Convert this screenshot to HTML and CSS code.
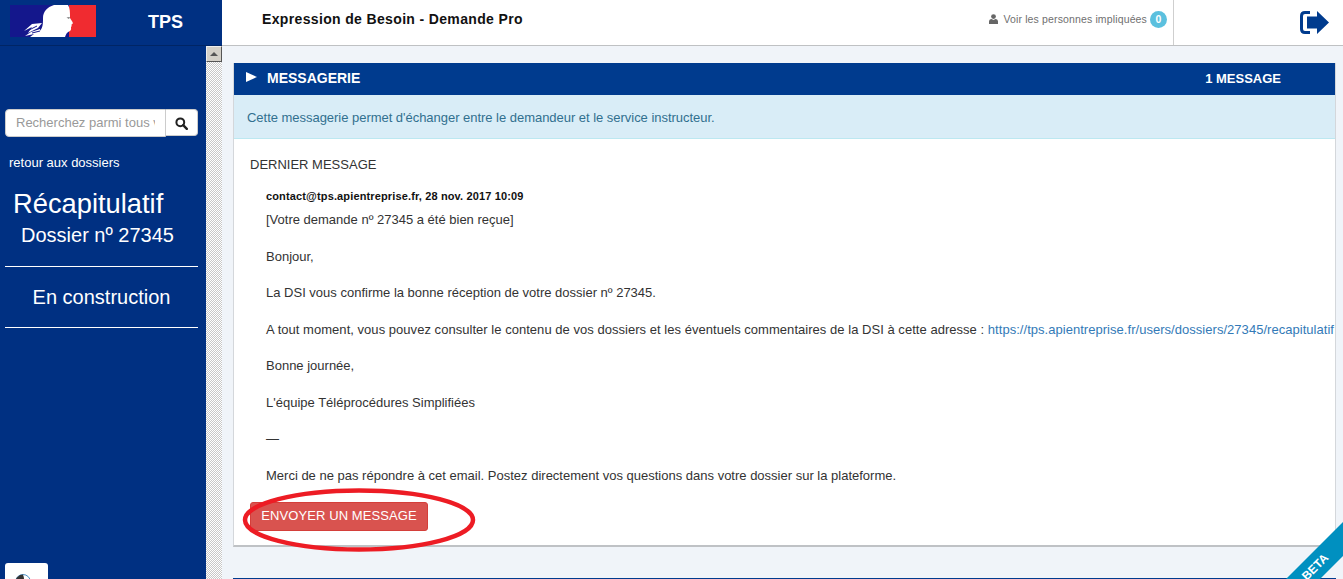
FILE: index.html
```html
<!DOCTYPE html>
<html lang="fr">
<head>
<meta charset="utf-8">
<title>TPS - Messagerie</title>
<link rel="stylesheet" href="styles.css">
</head>
<body>
<div class="app">
  <header class="topbar">
    <div class="brand">
      <svg class="logo" width="86" height="32" viewBox="0 0 86 32">
        <rect width="59" height="32" fill="#14178c"/>
        <rect x="59" width="27" height="32" fill="#f02b30"/>
        <path d="M44 0C37 2 33 7 33 13C33 19 33 23 29 27C27 29 27 31 30 32H55C56 29 57 27 60 26C61.500 25 61 23 61 22C62 21.500 61.500 20 61.500 19.500C63 19 63 18 62.500 17L60 13C60 7 60 3 58 0Z" fill="#fff"/>
        <path d="M32 18L22 19L14 26L22 22L18 28L28 23Z" fill="#fff"/>
        <path d="M30 24L21 27L15 31L24 29L20 32H31Z" fill="#fff"/>
        <path d="M19 25L27 21M22 28L30 26" stroke="#14178c" stroke-width="1"/>
        <path d="M56.500 12.500L60 12L59 14Z" fill="#777"/>
      </svg>
      <span class="brand-name">TPS</span>
    </div>
    <div class="title-area">
      <h1 class="page-title">Expression de Besoin - Demande Pro</h1>
      <div class="people">
        <svg class="user-icon" width="9" height="10" viewBox="0 0 9 10"><circle cx="4.500" cy="2.600" r="2.400" fill="#666"/><path d="M0 10V7.500C0 5.800 1.500 5 2.500 5L4.500 6L6.500 5C7.500 5 9 5.800 9 7.500V10Z" fill="#666"/></svg>
        <span class="people-label">Voir les personnes impliquées</span>
        <span class="badge">0</span>
      </div>
    </div>
    <div class="logout">
      <svg width="29" height="23" viewBox="0 0 29 23">
        <path d="M10 1.500H5C2.800 1.500 1.500 2.800 1.500 5V18C1.500 20.200 2.800 21.500 5 21.500H10" fill="none" stroke="#003b8e" stroke-width="3"/>
        <path d="M7 5.500H17V0L29 11.500L17 23V17.500H7Z" fill="#003b8e"/>
      </svg>
    </div>
  </header>
  <div class="workspace">
    <aside class="sidebar">
      <form class="search">
        <input class="search-input" type="text" placeholder="Recherchez parmi tous vos dossiers">
        <button class="search-btn" type="button" aria-label="Rechercher">
          <svg width="13" height="13" viewBox="0 0 13 13"><circle cx="5.300" cy="5.300" r="3.900" fill="none" stroke="#222" stroke-width="2"/><path d="M8.200 8.200L11.800 11.800" stroke="#222" stroke-width="2.400" stroke-linecap="round"/></svg>
        </button>
      </form>
      <a class="back-link">retour aux dossiers</a>
      <div class="recap">Récapitulatif</div>
      <div class="dossier">Dossier nº 27345</div>
      <div class="state">En construction</div>
      <div class="help-tab">
        <svg width="26" height="9" viewBox="0 0 26 9"><circle cx="8" cy="8" r="7.500" fill="#fff" stroke="#4d8fc4" stroke-width="1"/><path d="M8 0.500A7.500 7.500 0 0 0 8 15.500C9 12 10 5 8 0.500Z" fill="#333"/><path d="M18 7h3v2h-3z" fill="#999"/></svg>
      </div>
    </aside>
    <div class="scrollbar">
      <div class="scroll-btn"><span class="scroll-arrow"></span></div>
    </div>
    <main class="content">
      <section class="panel">
        <div class="panel-head">
          <span class="caret"></span>
          <h2 class="panel-title">MESSAGERIE</h2>
          <span class="panel-count">1 MESSAGE</span>
        </div>
        <div class="info">Cette messagerie permet d'échanger entre le demandeur et le service instructeur.</div>
        <div class="panel-body">
          <h3 class="last-title">DERNIER MESSAGE</h3>
          <div class="message">
            <div class="msg-meta">contact@tps.apientreprise.fr, 28 nov. 2017 10:09</div>
            <p class="msg-line first">[Votre demande nº 27345 a été bien reçue]</p>
            <p class="msg-line">Bonjour,</p>
            <p class="msg-line">La DSI vous confirme la bonne réception de votre dossier nº 27345.</p>
            <p class="msg-line wide">A tout moment, vous pouvez consulter le contenu de vos dossiers et les éventuels commentaires de la DSI à cette adresse : <a class="msg-link">https://tps.apientreprise.fr/users/dossiers/27345/recapitulatif</a></p>
            <p class="msg-line">Bonne journée,</p>
            <p class="msg-line">L'équipe Téléprocédures Simplifiées</p>
            <p class="msg-line">—</p>
            <p class="msg-line">Merci de ne pas répondre à cet email. Postez directement vos questions dans votre dossier sur la plateforme.</p>
          </div>
          <button class="send-btn" type="button">ENVOYER UN MESSAGE</button>
        </div>
      </section>
      <div class="next-panel"></div>
    </main>
  </div>
  <svg class="annotation" width="240" height="70" viewBox="0 0 240 70">
    <ellipse cx="120" cy="35" rx="114" ry="29.500" fill="none" stroke="#ed1c24" stroke-width="4.500"/>
  </svg>
  <div class="ribbon"><span class="ribbon-text">BETA</span></div>
</div>
</body>
</html>
```
FILE: styles.css
```css
* { box-sizing: border-box; }
html, body { margin: 0; height: 100%; overflow: hidden; }
body { font-family: "Liberation Sans", Arial, sans-serif; font-size: 13px; color: #333; background: #f0f4f9; }
.app { position: relative; width: 1343px; height: 579px; overflow: hidden; display: flex; flex-direction: column; }

.topbar { display: flex; height: 46px; flex: none; background: #fff; border-bottom: 1px solid #bfc1c3; }
.brand { width: 222px; height: 46px; flex: none; background: #003082; border-bottom: 1px solid #002565; display: flex; align-items: flex-start; }
.logo { margin: 5px 0 0 10px; flex: none; }
.brand-name { margin: 12px 0 0 52px; color: #fff; font-weight: 700; font-size: 18px; line-height: 20px; }
.title-area { width: 952px; flex: none; display: flex; justify-content: space-between; border-right: 1px solid #cfcfcf; height: 45px; }
.page-title { margin: 11px 0 0 40px; font-size: 14px; line-height: 17px; font-weight: 700; color: #111; letter-spacing: .35px; }
.people { display: flex; align-items: center; height: 16px; margin: 11px 6px 0 0; color: #6f6f6f; font-size: 10.500px; letter-spacing: .14px; }
.user-icon { margin-right: 5px; }
.badge { margin-left: 3px; width: 17px; height: 17px; border-radius: 50%; background: #5bc0de; color: #fff; font-weight: 700; font-size: 10.500px; text-align: center; line-height: 17px; }
.logout { flex: 1; display: flex; justify-content: flex-end; padding: 11px 14px 0 0; }

.workspace { flex: 1; display: flex; min-height: 0; }
.sidebar { position: relative; width: 206px; flex: none; background: #003082; color: #fff; padding: 63px 8px 0 5px; }
.search { display: flex; }
.search-input { width: 161px; height: 28px; border: 1px solid #ccc; border-radius: 4px 0 0 4px; padding: 0 10px 2px; font: 13px "Liberation Sans", Arial, sans-serif; background: #fff; }
.search-input::placeholder { color: #999; opacity: 1; }
.search-btn { width: 32px; height: 27px; border: 1px solid #ccc; border-left: 0; border-radius: 0 4px 4px 0; background: #fff; padding: 1px 0 0; display: flex; align-items: center; justify-content: center; }
.back-link { display: block; margin: 18px 0 0 4px; line-height: 16px; font-size: 13px; }
.recap { margin: 17px 0 0 8px; font-size: 27.300px; line-height: 32px; }
.dossier { margin: 2px 0 0 16px; font-size: 20px; line-height: 26px; padding-bottom: 18px; }
.state { border-top: 1px solid #fff; border-bottom: 1px solid #fff; text-align: center; font-size: 20px; line-height: 26px; padding: 17px 0; }
.help-tab { position: absolute; left: 5px; top: 517px; width: 43px; height: 20px; background: #fff; border-radius: 3px 3px 0 0; padding: 11px 0 0 10px; overflow: hidden; line-height: 0; }

.scrollbar { width: 16px; flex: none; background: repeating-conic-gradient(#c8c8c8 0 25%, #fff 0 50%) 0 0 / 2px 2px; }
.scroll-btn { height: 16px; background: #d4d0c8; border: 1px solid; border-color: #eee #555 #555 #eee; display: flex; align-items: center; justify-content: center; }
.scroll-arrow { width: 0; height: 0; border-left: 4px solid transparent; border-right: 4px solid transparent; border-bottom: 4px solid #555; }

.content { flex: 1; min-width: 0; padding: 17px 7px 0 11px; }
.panel { background: #fff; border: 1px solid #d4d7db; border-top: 0; border-bottom: 2px solid #bfc2c5; height: 484px; overflow: hidden; }
.panel-head { height: 32px; background: #003b8e; color: #fff; display: flex; align-items: center; font-weight: 700; padding: 0 0 2px 12px; }
.caret { width: 0; height: 0; border-left: 11px solid #fff; border-top: 5px solid transparent; border-bottom: 5px solid transparent; margin-top: -2px; }
.panel-title { margin: 0 0 0 10px; font-size: 14px; }
.panel-count { margin-left: auto; margin-right: 54px; font-size: 13px; }
.info { height: 44px; background: #d9edf7; border-bottom: 1px solid #bce8f1; color: #31708f; padding: 15px 0 0 13px; line-height: 16px; letter-spacing: -.03px; }
.panel-body { padding: 18px 0 0 16px; }
.last-title { margin: 0; font-size: 13px; font-weight: 400; line-height: 16px; color: #333; }
.message { padding-left: 16px; margin-top: 15px; }
.msg-meta { font-size: 11px; font-weight: 700; color: #111; line-height: 16px; letter-spacing: .14px; }
.msg-line { margin: 0 0 20.500px; line-height: 16px; white-space: nowrap; }
.msg-line.first { margin-top: 8px; }
.msg-line.wide { letter-spacing: .035px; }
.msg-link { color: #337ab7; }
.send-btn { display: block; margin: -2px 0 0; width: 178px; height: 29px; background: #d9534f; color: #fff; border: 1px solid #d43f3a; border-radius: 3px; font: 13px "Liberation Sans", Arial, sans-serif; letter-spacing: .1px; padding: 0 0 2px; }
.next-panel { height: 10px; margin-top: 31px; background: #003b8e; }

.annotation { position: absolute; left: 239px; top: 485px; }
.ribbon { position: absolute; left: 1265px; top: 550px; width: 110px; height: 24px; background: #0090c0; transform: rotate(-45deg); text-align: center; }
.ribbon-text { display: inline-block; color: #fff; font-weight: 700; font-size: 12px; line-height: 24px; margin-left: -14px; }
```
